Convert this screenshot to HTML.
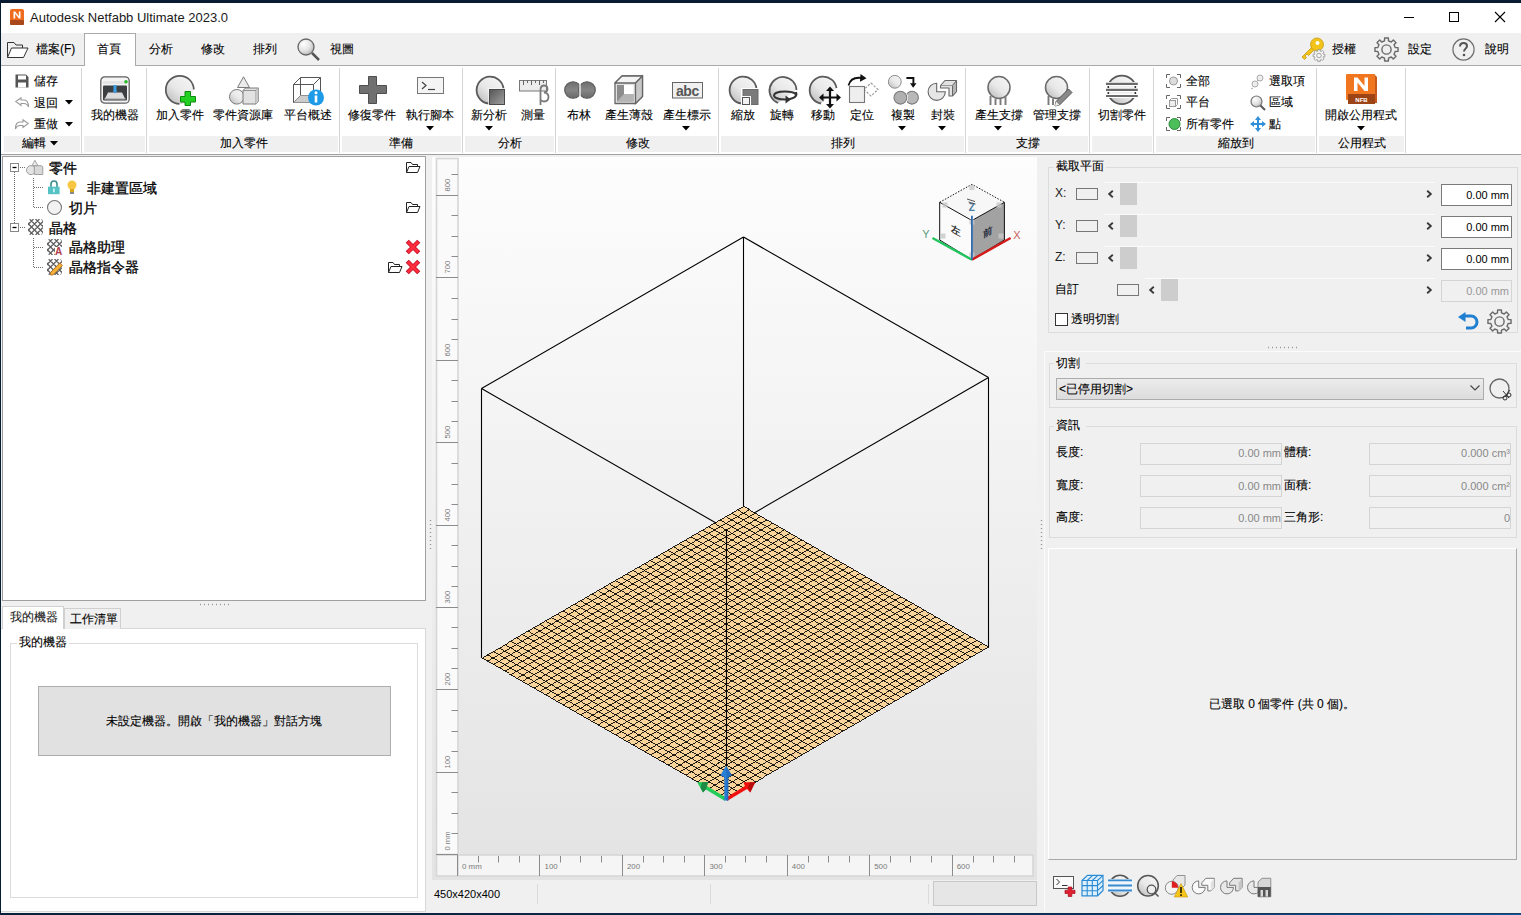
<!DOCTYPE html>
<html><head><meta charset="utf-8">
<style>
*{margin:0;padding:0;box-sizing:border-box}
html,body{width:1521px;height:915px;overflow:hidden;background:#f0f0f0;font-family:"Liberation Sans",sans-serif;font-size:12px;color:#000}
.a{position:absolute}
.t{position:absolute;white-space:nowrap;font-size:12px;line-height:14px;-webkit-text-stroke:0.1px currentColor}
svg{position:absolute;overflow:visible}
</style></head><body>
<svg width="0" height="0" style="left:0;top:0">
<defs>
<radialGradient id="sph" cx="0.35" cy="0.3" r="0.75"><stop offset="0" stop-color="#ffffff"/><stop offset="0.6" stop-color="#e2e2e2"/><stop offset="1" stop-color="#b4b4b4"/></radialGradient>
<linearGradient id="sph2" x1="0.85" y1="0.1" x2="0.15" y2="0.9"><stop offset="0" stop-color="#f4f4f4"/><stop offset="0.55" stop-color="#e8e8e8"/><stop offset="1" stop-color="#c2c2c2"/></linearGradient>
<linearGradient id="dsq" x1="0" y1="0" x2="1" y2="1"><stop offset="0" stop-color="#555"/><stop offset="1" stop-color="#a0a0a0"/></linearGradient>
<linearGradient id="bool" x1="0" y1="0" x2="0" y2="1"><stop offset="0" stop-color="#6e6e6e"/><stop offset="0.5" stop-color="#858585"/><stop offset="1" stop-color="#6a6a6a"/></linearGradient>
<linearGradient id="vpg" x1="0" y1="0" x2="0" y2="1"><stop offset="0" stop-color="#fdfdfd"/><stop offset="1" stop-color="#e2e2e2"/></linearGradient>
</defs></svg>

<div class="a" style="left:0px;top:0px;width:1521px;height:3px;background:#081b33"></div>
<div class="a" style="left:0px;top:0px;width:1px;height:915px;background:#081b33"></div>
<div class="a" style="left:0px;top:913px;width:1521px;height:1px;background:linear-gradient(to right,#0a1f3a,#102c4c 70%,#1a3d60)"></div>
<div class="a" style="left:0px;top:914px;width:1521px;height:1px;background:linear-gradient(to right,#0a1f3a,#0b2a50 60%,#0a5aa5)"></div>
<div class="a" style="left:1px;top:3px;width:1520px;height:30px;background:#fff"></div>
<svg style="left:10px;top:9px" width="14" height="16" viewBox="0 0 14 16"><rect x="0" y="0" width="14" height="16" rx="2" fill="#ef6c1f"/><rect x="0" y="11" width="14" height="5" rx="1" fill="#a9481a"/><path d="M3.5 9.5V2.5H5.2L8.8 7.2V2.5H10.5V9.5H8.8L5.2 4.8V9.5Z" fill="#fff"/></svg>
<div class="t" style="left:30px;top:10.0px;font-size:13px;line-height:15px;color:#1a1a1a;-webkit-text-stroke:0">Autodesk Netfabb Ultimate 2023.0</div>
<div class="a" style="left:1404px;top:17px;width:10px;height:1px;background:#000"></div>
<div class="a" style="left:1449px;top:12px;width:10px;height:10px;border:1px solid #000"></div>
<svg style="left:1495px;top:12px" width="10" height="10" viewBox="0 0 10 10"><path d="M0 0L10 10M10 0L0 10" stroke="#000" stroke-width="1.1"/></svg>
<div class="a" style="left:1px;top:33px;width:1520px;height:33px;background:#f0f0f0;border-bottom:1px solid #a9a9a9"></div>
<div class="a" style="left:84px;top:33px;width:52px;height:33px;background:#fff;border:1px solid #a9a9a9;border-bottom:none"></div>
<svg style="left:7px;top:41px" width="22" height="17" viewBox="0 0 22 17"><path d="M0.5 16.5V1.5H7L9 4H15.5V7" fill="none" stroke="#333" stroke-width="1"/><path d="M0.5 16.5L4.5 7H21L16.5 16.5Z" fill="#fff" stroke="#333" stroke-width="1"/></svg>
<div class="t" style="left:36px;top:42.0px;font-size:12px;line-height:14px;color:#000;">檔案(F)</div>
<div class="t" style="left:97px;top:42.0px;font-size:12px;line-height:14px;color:#000;">首頁</div>
<div class="t" style="left:149px;top:42.0px;font-size:12px;line-height:14px;color:#000;">分析</div>
<div class="t" style="left:201px;top:42.0px;font-size:12px;line-height:14px;color:#000;">修改</div>
<div class="t" style="left:253px;top:42.0px;font-size:12px;line-height:14px;color:#000;">排列</div>
<svg style="left:297px;top:38px" width="23" height="23" viewBox="0 0 23 23"><circle cx="9" cy="9" r="8" fill="url(#sph)" stroke="#666" stroke-width="1.3"/><path d="M15 15L22 22" stroke="#555" stroke-width="2.5"/></svg>
<div class="t" style="left:330px;top:42.0px;font-size:12px;line-height:14px;color:#000;">視圖</div>
<svg style="left:1300px;top:37px" width="25" height="24" viewBox="0 0 25 24"><path d="M12.5 9.5L2 20L4.5 22.5L6.5 20.5L5 19L7 17L8.5 18.5L15 12Z" fill="#f2c318" stroke="#c89a10" stroke-width="0.8"/><circle cx="17" cy="7.5" r="6.5" fill="#f2c318" stroke="#c89a10" stroke-width="0.8"/><circle cx="17.5" cy="6" r="2" fill="#fff"/><path d="M17.71 12.64L20.29 12.64L20.16 14.05L21.33 14.53L22.23 13.45L24.05 15.27L22.97 16.17L23.45 17.34L24.86 17.21L24.86 19.79L23.45 19.66L22.97 20.83L24.05 21.73L22.23 23.55L21.33 22.47L20.16 22.95L20.29 24.36L17.71 24.36L17.84 22.95L16.67 22.47L15.77 23.55L13.95 21.73L15.03 20.83L14.55 19.66L13.14 19.79L13.14 17.21L14.55 17.34L15.03 16.17L13.95 15.27L15.77 13.45L16.67 14.53L17.84 14.05Z" fill="#f4f4f4" stroke="#9a9a9a" stroke-width="0.9"/><circle cx="19" cy="18.5" r="2.3" fill="#f4f4f4" stroke="#9a9a9a" stroke-width="0.9"/></svg>
<div class="t" style="left:1332px;top:42.0px;font-size:12px;line-height:14px;color:#000;">授權</div>
<svg style="left:1374px;top:37px" width="25" height="25" viewBox="0 0 25 25"><path d="M10.58 0.96L14.42 0.96L14.46 3.82L17.25 4.98L19.30 2.98L22.02 5.70L20.02 7.75L21.18 10.54L24.04 10.58L24.04 14.42L21.18 14.46L20.02 17.25L22.02 19.30L19.30 22.02L17.25 20.02L14.46 21.18L14.42 24.04L10.58 24.04L10.54 21.18L7.75 20.02L5.70 22.02L2.98 19.30L4.98 17.25L3.82 14.46L0.96 14.42L0.96 10.58L3.82 10.54L4.98 7.75L2.98 5.70L5.70 2.98L7.75 4.98L10.54 3.82Z" fill="none" stroke="#6a6a6a" stroke-width="1.4" stroke-linejoin="round"/><circle cx="12.5" cy="12.5" r="4.6" fill="none" stroke="#6a6a6a" stroke-width="1.4"/></svg>
<div class="t" style="left:1408px;top:42.0px;font-size:12px;line-height:14px;color:#000;">設定</div>
<svg style="left:1452px;top:38px" width="23" height="23" viewBox="0 0 23 23"><circle cx="11.5" cy="11.5" r="10.6" fill="none" stroke="#707070" stroke-width="1.2"/><path d="M8 8.5C8 6 9.5 5 11.5 5C13.5 5 15 6.2 15 8C15 10.5 12 10.8 12 13.5" fill="none" stroke="#555" stroke-width="2"/><circle cx="12" cy="17" r="1.3" fill="#555"/></svg>
<div class="t" style="left:1485px;top:42.0px;font-size:12px;line-height:14px;color:#000;">說明</div>
<div class="a" style="left:1px;top:66px;width:1520px;height:88px;background:#fff"></div>
<div class="a" style="left:1px;top:154px;width:1520px;height:1px;background:#a0a0a0"></div>
<div class="a" style="left:1px;top:155px;width:1520px;height:2px;background:#f0f0f0"></div>
<div class="a" style="left:4px;top:136px;width:76px;height:16px;background:#f0f0f0"></div>
<div class="a" style="left:81px;top:68px;width:1px;height:85px;background:#d4d4d4"></div>
<div class="a" style="left:84px;top:136px;width:61px;height:16px;background:#f0f0f0"></div>
<div class="a" style="left:146px;top:68px;width:1px;height:85px;background:#d4d4d4"></div>
<div class="a" style="left:149px;top:136px;width:189px;height:16px;background:#f0f0f0"></div>
<div class="a" style="left:339px;top:68px;width:1px;height:85px;background:#d4d4d4"></div>
<div class="a" style="left:342px;top:136px;width:119px;height:16px;background:#f0f0f0"></div>
<div class="a" style="left:462px;top:68px;width:1px;height:85px;background:#d4d4d4"></div>
<div class="a" style="left:465px;top:136px;width:89px;height:16px;background:#f0f0f0"></div>
<div class="a" style="left:555px;top:68px;width:1px;height:85px;background:#d4d4d4"></div>
<div class="a" style="left:558px;top:136px;width:159px;height:16px;background:#f0f0f0"></div>
<div class="a" style="left:718px;top:68px;width:1px;height:85px;background:#d4d4d4"></div>
<div class="a" style="left:721px;top:136px;width:243px;height:16px;background:#f0f0f0"></div>
<div class="a" style="left:965px;top:68px;width:1px;height:85px;background:#d4d4d4"></div>
<div class="a" style="left:968px;top:136px;width:120px;height:16px;background:#f0f0f0"></div>
<div class="a" style="left:1089px;top:68px;width:1px;height:85px;background:#d4d4d4"></div>
<div class="a" style="left:1092px;top:136px;width:60px;height:16px;background:#f0f0f0"></div>
<div class="a" style="left:1153px;top:68px;width:1px;height:85px;background:#d4d4d4"></div>
<div class="a" style="left:1156px;top:136px;width:159px;height:16px;background:#f0f0f0"></div>
<div class="a" style="left:1316px;top:68px;width:1px;height:85px;background:#d4d4d4"></div>
<div class="a" style="left:1319px;top:136px;width:85px;height:16px;background:#f0f0f0"></div>
<div class="a" style="left:1405px;top:68px;width:1px;height:85px;background:#d4d4d4"></div>
<div class="t" style="left:22px;top:136.0px;font-size:12px;line-height:14px;color:#000;">編輯</div>
<svg style="left:50.0px;top:140.75px" width="8" height="4.5" viewBox="0 0 8 4.5"><path d="M0 0H8L4.0 4.5Z" fill="#000"/></svg>
<div class="t" style="left:183.5px;width:120px;text-align:center;top:136.0px;font-size:12px;line-height:14px;color:#000;">加入零件</div>
<div class="t" style="left:341.0px;width:120px;text-align:center;top:136.0px;font-size:12px;line-height:14px;color:#000;">準備</div>
<div class="t" style="left:449.5px;width:120px;text-align:center;top:136.0px;font-size:12px;line-height:14px;color:#000;">分析</div>
<div class="t" style="left:578.0px;width:120px;text-align:center;top:136.0px;font-size:12px;line-height:14px;color:#000;">修改</div>
<div class="t" style="left:782.7px;width:120px;text-align:center;top:136.0px;font-size:12px;line-height:14px;color:#000;">排列</div>
<div class="t" style="left:967.5px;width:120px;text-align:center;top:136.0px;font-size:12px;line-height:14px;color:#000;">支撐</div>
<div class="t" style="left:1175.6px;width:120px;text-align:center;top:136.0px;font-size:12px;line-height:14px;color:#000;">縮放到</div>
<div class="t" style="left:1301.7px;width:120px;text-align:center;top:136.0px;font-size:12px;line-height:14px;color:#000;">公用程式</div>
<svg style="left:15px;top:74px" width="14" height="14" viewBox="0 0 14 14"><path d="M0.5 0.5H11L13.5 3V13.5H0.5Z" fill="#555"/><rect x="3" y="1.5" width="8" height="4" fill="#fff"/><rect x="3" y="8.5" width="8" height="5" fill="#fff"/></svg>
<div class="t" style="left:34px;top:74.0px;font-size:12px;line-height:14px;color:#000;">儲存</div>
<svg style="left:15px;top:97px" width="14" height="11" viewBox="0 0 14 11"><path d="M0.8 4.5L6 0.8V3H9C12 3 13.5 5 13.5 10C12.5 7.5 11 6.5 9 6.5H6V8.5Z" fill="#fff" stroke="#999" stroke-width="1.1"/></svg>
<div class="t" style="left:34px;top:95.5px;font-size:12px;line-height:14px;color:#000;">退回</div>
<svg style="left:64.5px;top:100.25px" width="8" height="4.5" viewBox="0 0 8 4.5"><path d="M0 0H8L4.0 4.5Z" fill="#000"/></svg>
<svg style="left:15px;top:119px" width="14" height="11" viewBox="0 0 14 11"><path d="M13.2 4.5L8 0.8V3H5C2 3 0.5 5 0.5 10C1.5 7.5 3 6.5 5 6.5H8V8.5Z" fill="#fff" stroke="#999" stroke-width="1.1"/></svg>
<div class="t" style="left:34px;top:117.0px;font-size:12px;line-height:14px;color:#000;">重做</div>
<svg style="left:64.5px;top:121.75px" width="8" height="4.5" viewBox="0 0 8 4.5"><path d="M0 0H8L4.0 4.5Z" fill="#000"/></svg>
<svg style="left:100px;top:76px" width="30" height="28" viewBox="0 0 30 28"><rect x="0.8" y="0.8" width="28.4" height="26.4" rx="4" fill="#f4f4f4" stroke="#5e5e5e" stroke-width="1.3"/><rect x="3" y="5" width="24" height="3" fill="#e4e4e4"/><rect x="3" y="9.5" width="24" height="15" rx="1" fill="#3c3f42"/><path d="M5 22.5L8 16.5H22L25 22.5Z" fill="#dcdcdc"/><rect x="4.5" y="22" width="21" height="1.5" fill="#bbb"/><rect x="13.5" y="9" width="3" height="7" fill="#3a9be0"/><path d="M12.8 14.5H17.2L15 17.5Z" fill="#3a9be0"/><circle cx="26" cy="5.8" r="1.8" fill="#2cb82c"/></svg>
<div class="t" style="left:54.5px;width:120px;text-align:center;top:107.5px;font-size:12px;line-height:14px;color:#000;">我的機器</div>
<svg style="left:165px;top:75px" width="31" height="31" viewBox="0 0 31 31"><path d="M14.5 28.8A14 14 0 1 1 28.8 14.5" fill="url(#sph2)" stroke="#5a5a5a" stroke-width="1.7"/><path d="M28.8 14.5A14 14 0 0 1 14.5 28.8Z" fill="url(#sph2)"/><path d="M20 16.5H25.5V21.5H30.5V27H25.5V30.5H20V27H15.5V21.5H20Z" fill="#22d022" stroke="#0e8a0e" stroke-width="1"/></svg>
<div class="t" style="left:119.5px;width:120px;text-align:center;top:107.5px;font-size:12px;line-height:14px;color:#000;">加入零件</div>
<svg style="left:229px;top:76px" width="31" height="30" viewBox="0 0 31 30"><path d="M14.5 0.8L20.5 11.5H8.5Z" fill="#ebebeb" stroke="#7a7a7a" stroke-width="1"/><circle cx="7.8" cy="20.8" r="7.3" fill="url(#sph2)" stroke="#7a7a7a" stroke-width="1"/><path d="M14 14.5L16.5 12H29.5V25.5L27 28H14Z" fill="#e2e2e2" stroke="#7a7a7a" stroke-width="1"/><path d="M14 14.5H27V28M27 14.5L29.5 12" fill="none" stroke="#8a8a8a" stroke-width="0.9"/><path d="M27 14.5L29.5 12V25.5L27 28Z" fill="#c8c8c8"/></svg>
<div class="t" style="left:183.4px;width:120px;text-align:center;top:107.5px;font-size:12px;line-height:14px;color:#000;">零件資源庫</div>
<svg style="left:292px;top:76px" width="33" height="30" viewBox="0 0 33 30"><path d="M1.5 8.5H21.5V26.5H1.5Z M1.5 8.5L8.5 1.5H28.5L21.5 8.5 M28.5 1.5V19.5L21.5 26.5 M8.5 1.5V19.5H28.5 M8.5 19.5L1.5 26.5" fill="none" stroke="#555" stroke-width="1"/><path d="M1.5 26.5L8.5 19.5H28.5L21.5 26.5Z" fill="#ccc"/><circle cx="24" cy="21.5" r="8" fill="#1e9be8"/><rect x="22.7" y="19.5" width="2.6" height="7" fill="#fff"/><circle cx="24" cy="16.8" r="1.5" fill="#fff"/></svg>
<div class="t" style="left:247.7px;width:120px;text-align:center;top:107.5px;font-size:12px;line-height:14px;color:#000;">平台概述</div>
<svg style="left:359px;top:76px" width="28" height="28" viewBox="0 0 28 28"><path d="M9.5 0.5H17.5V9.5H27.5V17.5H17.5V27.5H9.5V17.5H0.5V9.5H9.5Z" fill="#707070" stroke="#4e4e4e"/></svg>
<div class="t" style="left:312.0px;width:120px;text-align:center;top:107.5px;font-size:12px;line-height:14px;color:#000;">修復零件</div>
<svg style="left:417px;top:77px" width="27" height="17" viewBox="0 0 27 17"><rect x="0.5" y="0.5" width="26" height="16" fill="#f4f4f4" stroke="#777"/><path d="M5 5L9 8.5L5 12" fill="none" stroke="#444" stroke-width="1.2"/><path d="M11 12.5H18" stroke="#444" stroke-width="1.2"/></svg>
<div class="t" style="left:370.0px;width:120px;text-align:center;top:107.5px;font-size:12px;line-height:14px;color:#000;">執行腳本</div>
<svg style="left:426.0px;top:125.75px" width="8" height="4.5" viewBox="0 0 8 4.5"><path d="M0 0H8L4.0 4.5Z" fill="#000"/></svg>
<svg style="left:475px;top:75px" width="31" height="30" viewBox="0 0 31 30"><path d="M13.5 28.5A13.5 13.5 0 1 1 28.5 13.5" fill="url(#sph2)" stroke="#5a5a5a" stroke-width="1.8"/><rect x="13.5" y="13.5" width="17" height="17" fill="#fff"/><rect x="14.5" y="14.5" width="15" height="15" fill="url(#dsq)" stroke="#4a4a4a"/></svg>
<div class="t" style="left:429.0px;width:120px;text-align:center;top:107.5px;font-size:12px;line-height:14px;color:#000;">新分析</div>
<svg style="left:484.75px;top:125.75px" width="8" height="4.5" viewBox="0 0 8 4.5"><path d="M0 0H8L4.0 4.5Z" fill="#000"/></svg>
<svg style="left:519px;top:79px" width="31" height="27" viewBox="0 0 31 27"><rect x="0.5" y="1.5" width="27" height="10.5" fill="#ececec" stroke="#777"/><path d="M4.5 1.5V6M8.5 1.5V4M12.5 1.5V6M16.5 1.5V4M20.5 1.5V6M24.5 1.5V4" stroke="#666"/><path d="M21.5 26V11C21.5 7.5 23 6.5 25 6.5C27 6.5 28.5 7.8 28.5 10C28.5 12 27 13.2 25 13.5C27.8 13.8 29.5 15.5 29.5 18C29.5 20.8 27.5 22.5 25 22.5C23.5 22.5 22.3 21.8 21.5 20.8" fill="none" stroke="#7a7a7a" stroke-width="1.8"/></svg>
<div class="t" style="left:472.5px;width:120px;text-align:center;top:107.5px;font-size:12px;line-height:14px;color:#000;">測量</div>
<svg style="left:564px;top:80px" width="32" height="20" viewBox="0 0 32 20"><circle cx="9" cy="10" r="8.3" fill="url(#bool)" stroke="#555" stroke-width="1.1"/><circle cx="23" cy="10" r="8.3" fill="url(#bool)" stroke="#555" stroke-width="1.1"/><path d="M16 2V18" stroke="#fff" stroke-width="1.3"/></svg>
<div class="t" style="left:519.4px;width:120px;text-align:center;top:107.5px;font-size:12px;line-height:14px;color:#000;">布林</div>
<svg style="left:614px;top:75px" width="30" height="30" viewBox="0 0 30 30"><path d="M1 8L8 1H28.5V21.5L21.5 28.5H1Z" fill="#e0e0e0" stroke="#666" stroke-width="1.3"/><path d="M1 8L8 1H28.5L21.5 8Z" fill="#f4f4f4" stroke="#666" stroke-width="1.3" stroke-linejoin="round"/><path d="M21.5 8L28.5 1V21.5L21.5 28.5Z" fill="#c8c8c8" stroke="#666" stroke-width="1.3"/><rect x="3" y="10" width="16.5" height="16.5" fill="#fff"/><path d="M3 10H10V19H19.5V26.5H3Z" fill="#8c8c8c"/><path d="M3 26.5L10 19H19.5V26.5Z" fill="#b4b4b4"/></svg>
<div class="t" style="left:568.5px;width:120px;text-align:center;top:107.5px;font-size:12px;line-height:14px;color:#000;">產生薄殼</div>
<svg style="left:672px;top:82px" width="31" height="17" viewBox="0 0 31 17"><rect x="0.5" y="0.5" width="30" height="15.5" fill="#f0f0f0" stroke="#666"/><text x="15.5" y="13.5" text-anchor="middle" font-size="14" font-weight="bold" font-family="Liberation Sans" fill="#555" letter-spacing="-0.3">abc</text></svg>
<div class="t" style="left:626.5px;width:120px;text-align:center;top:107.5px;font-size:12px;line-height:14px;color:#000;">產生標示</div>
<svg style="left:682.0px;top:125.75px" width="8" height="4.5" viewBox="0 0 8 4.5"><path d="M0 0H8L4.0 4.5Z" fill="#000"/></svg>
<svg style="left:728px;top:75px" width="32" height="31" viewBox="0 0 32 31"><path d="M13.5 28.5A13.5 13.5 0 1 1 28.5 13.5" fill="url(#sph2)" stroke="#5a5a5a" stroke-width="1.8"/><rect x="13" y="13" width="18" height="18" fill="#fff"/><rect x="15" y="14.5" width="15" height="15" fill="#7a7a7a" stroke="#6a6a6a"/><rect x="13" y="21" width="10" height="10" fill="#fff"/><rect x="14.5" y="22.5" width="7" height="7" fill="#f2f2f2" stroke="#555"/></svg>
<div class="t" style="left:682.7px;width:120px;text-align:center;top:107.5px;font-size:12px;line-height:14px;color:#000;">縮放</div>
<svg style="left:768px;top:75px" width="32" height="31" viewBox="0 0 32 31"><path d="M10 28A13.5 13.5 0 1 1 28.5 15" fill="url(#sph2)" stroke="#5a5a5a" stroke-width="1.8"/><path d="M28 17C30 22 24 24.5 17 24.5C10 24.5 6 22.5 6 20.5C6 18 11 16.5 17 16.5C22 16.5 26 17.5 27.5 19" fill="none" stroke="#333" stroke-width="2"/><path d="M17.5 20.5L23 24.5L17.5 28.5Z" fill="#333"/></svg>
<div class="t" style="left:722.3px;width:120px;text-align:center;top:107.5px;font-size:12px;line-height:14px;color:#000;">旋轉</div>
<svg style="left:808px;top:75px" width="32" height="32" viewBox="0 0 32 32"><path d="M13 28.5A13.5 13.5 0 1 1 28.5 13" fill="url(#sph2)" stroke="#5a5a5a" stroke-width="1.8"/><path d="M22 15V30M14.5 22.5H29.5" stroke="#111" stroke-width="2.2"/><path d="M22 11.5L26 16H18Z M22 33.5L26 29H18Z M11 22.5L15.5 18.5V26.5Z M33 22.5L28.5 18.5V26.5Z" fill="#111"/></svg>
<div class="t" style="left:762.5px;width:120px;text-align:center;top:107.5px;font-size:12px;line-height:14px;color:#000;">移動</div>
<svg style="left:847px;top:74px" width="32" height="31" viewBox="0 0 32 31"><path d="M24 9L31 15.5L24 22L17 15.5Z" fill="none" stroke="#9a9a9a" stroke-width="1.2" stroke-dasharray="2.2 1.6"/><rect x="2.5" y="12.5" width="15" height="16" fill="#eee" stroke="#777" stroke-width="1.1"/><path d="M1.5 11.5C3 5.5 8 3 15 4" fill="none" stroke="#111" stroke-width="1.8"/><path d="M13.5 0L19.5 4.3L13 7.8Z" fill="#111"/></svg>
<div class="t" style="left:802.2px;width:120px;text-align:center;top:107.5px;font-size:12px;line-height:14px;color:#000;">定位</div>
<svg style="left:880px;top:70px" width="40" height="40" viewBox="0 0 40 40"><circle cx="14.8" cy="11.8" r="6.4" fill="url(#sph2)" stroke="#8a8a8a" stroke-width="1"/><path d="M26.4 8H33.4V14" fill="none" stroke="#111" stroke-width="1.9"/><path d="M30 13.3H36.5L33.2 17.8Z" fill="#111"/><circle cx="32" cy="27.7" r="6.4" fill="#b8b8b8" stroke="#7a7a7a" stroke-width="1.1"/><circle cx="20.4" cy="27.7" r="7.6" fill="#fff"/><circle cx="20.4" cy="27.7" r="6.4" fill="#b0b0b0" stroke="#7a7a7a" stroke-width="1.1"/></svg>
<div class="t" style="left:843.0px;width:120px;text-align:center;top:107.5px;font-size:12px;line-height:14px;color:#000;">複製</div>
<svg style="left:897.8px;top:125.75px" width="8" height="4.5" viewBox="0 0 8 4.5"><path d="M0 0H8L4.0 4.5Z" fill="#000"/></svg>
<svg style="left:920px;top:70px" width="40" height="40" viewBox="0 0 40 40"><path d="M16.7 21.75V13.2A8.6 8.6 0 1 0 25.3 21.75Z" fill="#e6e6e6" stroke="#666" stroke-width="1.1"/><path d="M20.5 15.5L25 10.5H36.5V21.5L32.5 26H29V18H20.5Z" fill="#e2e2e2" stroke="#666" stroke-width="1.1" stroke-linejoin="round"/><path d="M32.5 15.5V26L36.5 21.5V10.5Z" fill="#b5b5b5" stroke="#666" stroke-width="1"/><path d="M20.5 15.5H32.5L36.5 10.5" fill="none" stroke="#888" stroke-width="0.8"/></svg>
<div class="t" style="left:882.7px;width:120px;text-align:center;top:107.5px;font-size:12px;line-height:14px;color:#000;">封裝</div>
<svg style="left:938.0px;top:125.75px" width="8" height="4.5" viewBox="0 0 8 4.5"><path d="M0 0H8L4.0 4.5Z" fill="#000"/></svg>
<svg style="left:986px;top:76px" width="26" height="30" viewBox="0 0 26 30"><circle cx="13" cy="11.5" r="11" fill="url(#sph2)" stroke="#6a6a6a" stroke-width="1.5"/><path d="M4.5 20V29M9.5 22.5V29M14.5 22.5V29M19.5 20V29" stroke="#7a7a7a" stroke-width="1.9"/></svg>
<div class="t" style="left:938.7px;width:120px;text-align:center;top:107.5px;font-size:12px;line-height:14px;color:#000;">產生支撐</div>
<svg style="left:993.7px;top:125.75px" width="8" height="4.5" viewBox="0 0 8 4.5"><path d="M0 0H8L4.0 4.5Z" fill="#000"/></svg>
<svg style="left:1045px;top:76px" width="28" height="30" viewBox="0 0 28 30"><circle cx="11.5" cy="11.5" r="11" fill="url(#sph2)" stroke="#6a6a6a" stroke-width="1.5"/><path d="M3.5 20V29M8 22.5V29" stroke="#7a7a7a" stroke-width="1.9"/><path d="M23.5 13L27 16.5L14.5 29L10 30L11 25.5Z" fill="#8a8a8a" stroke="#555" stroke-width="1"/><path d="M10 30L11 25.5L14.5 29Z" fill="#eee"/></svg>
<div class="t" style="left:996.5px;width:120px;text-align:center;top:107.5px;font-size:12px;line-height:14px;color:#000;">管理支撐</div>
<svg style="left:1052.0px;top:125.75px" width="8" height="4.5" viewBox="0 0 8 4.5"><path d="M0 0H8L4.0 4.5Z" fill="#000"/></svg>
<svg style="left:1100px;top:70px" width="44" height="40" viewBox="0 0 44 40"><circle cx="21.8" cy="19.85" r="14.3" fill="url(#sph2)" stroke="#585858" stroke-width="1.8"/><rect x="5" y="12" width="34" height="16" fill="#fff"/><path d="M6 13.9H37.8M6 19.9H37.8M6 26H37.8" stroke="#6a6a6a" stroke-width="2.2"/><path d="M10 16.9H33.6M10 22.9H33.6" stroke="#e6e6e6" stroke-width="1.2"/><circle cx="8.3" cy="16.9" r="1" fill="#222"/><circle cx="35.3" cy="16.9" r="1" fill="#222"/><circle cx="8.3" cy="22.9" r="1" fill="#222"/><circle cx="35.3" cy="22.9" r="1" fill="#222"/></svg>
<div class="t" style="left:1061.6px;width:120px;text-align:center;top:107.5px;font-size:12px;line-height:14px;color:#000;">切割零件</div>
<svg style="left:1166px;top:74px" width="15" height="14" viewBox="0 0 15 14"><path d="M0.5 4V0.5H4M11 0.5H14.5V4M14.5 10V13.5H11M4 13.5H0.5V10" fill="none" stroke="#666"/></svg>
<svg style="left:1168px;top:76px" width="11" height="10" viewBox="0 0 11 10"><circle cx="5.5" cy="5" r="4" fill="#ddd" stroke="#999"/></svg>
<div class="t" style="left:1186px;top:74.0px;font-size:12px;line-height:14px;color:#000;">全部</div>
<svg style="left:1166px;top:95px" width="15" height="14" viewBox="0 0 15 14"><path d="M0.5 4V0.5H4M11 0.5H14.5V4M14.5 10V13.5H11M4 13.5H0.5V10" fill="none" stroke="#666"/></svg>
<svg style="left:1169px;top:98px" width="9" height="9" viewBox="0 0 9 9"><rect x="0.5" y="2.5" width="6" height="6" fill="#eee" stroke="#999"/><path d="M0.5 2.5L2.5 0.5H8.5V6.5L6.5 8.5" fill="none" stroke="#999"/></svg>
<div class="t" style="left:1186px;top:95.3px;font-size:12px;line-height:14px;color:#000;">平台</div>
<svg style="left:1166px;top:117px" width="15" height="14" viewBox="0 0 15 14"><path d="M0.5 4V0.5H4M11 0.5H14.5V4M14.5 10V13.5H11M4 13.5H0.5V10" fill="none" stroke="#666"/></svg>
<svg style="left:1168px;top:118px" width="12" height="12" viewBox="0 0 12 12"><circle cx="6.5" cy="6" r="5.5" fill="#4cbf5a" stroke="#2a8a3a"/></svg>
<div class="t" style="left:1186px;top:117.4px;font-size:12px;line-height:14px;color:#000;">所有零件</div>
<svg style="left:1251px;top:74px" width="14" height="15" viewBox="0 0 14 15"><circle cx="9" cy="4" r="3" fill="#eee" stroke="#aaa"/><circle cx="4" cy="10" r="3" fill="#eee" stroke="#aaa"/><path d="M7 6L5 8M2 14L0 15" stroke="#aaa"/></svg>
<div class="t" style="left:1269px;top:74.0px;font-size:12px;line-height:14px;color:#000;">選取項</div>
<svg style="left:1250px;top:95px" width="16" height="16" viewBox="0 0 16 16"><circle cx="6.5" cy="6.5" r="5.5" fill="url(#sph)" stroke="#777" stroke-width="1.2"/><path d="M10.5 10.5L15 15" stroke="#555" stroke-width="2"/></svg>
<div class="t" style="left:1269px;top:95.3px;font-size:12px;line-height:14px;color:#000;">區域</div>
<svg style="left:1250px;top:116px" width="16" height="16" viewBox="0 0 16 16"><path d="M8 0L11 4H9V7H12V5L16 8L12 11V9H9V12H11L8 16L5 12H7V9H4V11L0 8L4 5V7H7V4H5Z" fill="#2f8fd8"/></svg>
<div class="t" style="left:1269px;top:117.4px;font-size:12px;line-height:14px;color:#000;">點</div>
<svg style="left:1346px;top:74px" width="32" height="32" viewBox="0 0 32 32"><path d="M2 0H28L31 3V29H2Z" fill="#c65a1c"/><rect x="0" y="0" width="29" height="26" rx="1" fill="#f0761f"/><rect x="2" y="20" width="27" height="10" fill="#9c4416"/><path d="M8 17V3.5H11.5L18.5 12V3.5H22V17H18.5L11.5 8.5V17Z" fill="#fff"/><text x="15.5" y="28" text-anchor="middle" font-size="6" font-weight="bold" font-family="Liberation Sans" fill="#fff">NFB</text></svg>
<div class="t" style="left:1301.3px;width:120px;text-align:center;top:107.5px;font-size:12px;line-height:14px;color:#000;">開啟公用程式</div>
<svg style="left:1357.2px;top:125.75px" width="8" height="4.5" viewBox="0 0 8 4.5"><path d="M0 0H8L4.0 4.5Z" fill="#000"/></svg>
<div class="a" style="left:2px;top:156px;width:424px;height:445px;background:#fff;border:1px solid #a0a0a0"></div>
<svg style="left:0px;top:0px" width="1" height="1" viewBox="0 0 1 1"></svg>
<svg style="left:0;top:0" width="100" height="300"><path d="M14.5 172V223M20 167.5H26M20 227.5H26M33.5 178V207.5M34 187.5H43M34 207.5H43M33.5 238V267.5M34 247.5H43M34 267.5H43" fill="none" stroke="#6a6a6a" stroke-width="1" stroke-dasharray="1 1"/><rect x="10.5" y="163.5" width="8" height="8" fill="#fff" stroke="#888"/><path d="M12.5 167.5H16.5" stroke="#000" stroke-width="1.3"/><rect x="10.5" y="223.5" width="8" height="8" fill="#fff" stroke="#888"/><path d="M12.5 227.5H16.5" stroke="#000" stroke-width="1.3"/></svg>
<svg style="left:24px;top:157px" width="20" height="20" viewBox="0 0 20 20"><path d="M10.9 3.3L14 8.7H8Z" fill="#eee" stroke="#999" stroke-width="0.9"/><circle cx="7" cy="13.1" r="4.5" fill="#e4e4e4" stroke="#999" stroke-width="0.9"/><path d="M10.3 8.7H17.6L18.8 10V17.5H10.3Z" fill="#d8d8d8" stroke="#999" stroke-width="0.9"/></svg>
<div class="t" style="left:49px;top:159.5px;font-size:14px;line-height:16px;color:#000;-webkit-text-stroke:0.3px currentColor">零件</div>
<svg style="left:48px;top:179px" width="12" height="16" viewBox="0 0 12 16"><path d="M3 8V5A3 3 0 0 1 9 5V8" fill="none" stroke="#3a8f8f" stroke-width="1.6"/><rect x="0" y="7.7" width="11.6" height="7.5" fill="#55c2c6"/><rect x="5.2" y="9.5" width="1.4" height="3.8" fill="#e8ffff"/></svg>
<svg style="left:67px;top:180px" width="10" height="15" viewBox="0 0 10 15"><circle cx="5" cy="5" r="4.5" fill="#f7c642"/><path d="M3 9H7V12H3Z" fill="#d9a520"/><rect x="3" y="12" width="4" height="2" fill="#888"/></svg>
<div class="t" style="left:86.5px;top:179.5px;font-size:14px;line-height:16px;color:#000;-webkit-text-stroke:0.3px currentColor">非建置區域</div>
<svg style="left:47px;top:200px" width="15" height="15" viewBox="0 0 15 15"><circle cx="7.5" cy="7.5" r="7" fill="#f2f2f2" stroke="#777" stroke-width="1.1"/></svg>
<div class="t" style="left:69px;top:199.5px;font-size:14px;line-height:16px;color:#000;-webkit-text-stroke:0.3px currentColor">切片</div>
<svg style="left:28px;top:219px" width="15" height="16" viewBox="0 0 15 16"><clipPath id="cl1"><rect x="0" y="0" width="15" height="16" rx="3"/></clipPath><path d="M-16.5 0L-0.5 16M-0.5 0L-16.5 16M-10.5 0L5.5 16M5.5 0L-10.5 16M-4.5 0L11.5 16M11.5 0L-4.5 16M1.5 0L17.5 16M17.5 0L1.5 16M7.5 0L23.5 16M23.5 0L7.5 16M13.5 0L29.5 16M29.5 0L13.5 16M19.5 0L35.5 16M35.5 0L19.5 16" clip-path="url(#cl1)" stroke="#5e5e5e" stroke-width="1.25" fill="none"/></svg>
<div class="t" style="left:49px;top:219.5px;font-size:14px;line-height:16px;color:#000;-webkit-text-stroke:0.3px currentColor">晶格</div>
<svg style="left:47px;top:239px" width="15" height="16" viewBox="0 0 15 16"><clipPath id="cl2"><rect x="0" y="0" width="15" height="16" rx="3"/></clipPath><path d="M-16.5 0L-0.5 16M-0.5 0L-16.5 16M-10.5 0L5.5 16M5.5 0L-10.5 16M-4.5 0L11.5 16M11.5 0L-4.5 16M1.5 0L17.5 16M17.5 0L1.5 16M7.5 0L23.5 16M23.5 0L7.5 16M13.5 0L29.5 16M29.5 0L13.5 16M19.5 0L35.5 16M35.5 0L19.5 16" clip-path="url(#cl2)" stroke="#5e5e5e" stroke-width="1.25" fill="none"/><rect x="8" y="8" width="7" height="8" fill="#fff"/><text x="11.5" y="16" text-anchor="middle" font-size="10" font-weight="bold" font-family="Liberation Sans" fill="#b03a4a">A</text></svg>
<div class="t" style="left:69px;top:239.0px;font-size:14px;line-height:16px;color:#000;-webkit-text-stroke:0.3px currentColor">晶格助理</div>
<svg style="left:47px;top:259px" width="15" height="16" viewBox="0 0 15 16"><clipPath id="cl3"><rect x="0" y="0" width="15" height="16" rx="3"/></clipPath><path d="M-16.5 0L-0.5 16M-0.5 0L-16.5 16M-10.5 0L5.5 16M5.5 0L-10.5 16M-4.5 0L11.5 16M11.5 0L-4.5 16M1.5 0L17.5 16M17.5 0L1.5 16M7.5 0L23.5 16M23.5 0L7.5 16M13.5 0L29.5 16M29.5 0L13.5 16M19.5 0L35.5 16M35.5 0L19.5 16" clip-path="url(#cl3)" stroke="#5e5e5e" stroke-width="1.25" fill="none"/><path d="M13 4L15.5 6.5L6 16H3.5V13.5Z" fill="#f3b13a" stroke="#b06a1a" stroke-width="0.8"/></svg>
<div class="t" style="left:69px;top:259.0px;font-size:14px;line-height:16px;color:#000;-webkit-text-stroke:0.3px currentColor">晶格指令器</div>
<svg style="left:406px;top:162px" width="15" height="11" viewBox="0 0 15 11"><path d="M0.5 10.5V0.5H5L6.5 2.5H11.5V4.5" fill="none" stroke="#222"/><path d="M0.5 10.5L3 4.5H14L11.5 10.5Z" fill="#fff" stroke="#222"/></svg>
<svg style="left:406px;top:202px" width="15" height="11" viewBox="0 0 15 11"><path d="M0.5 10.5V0.5H5L6.5 2.5H11.5V4.5" fill="none" stroke="#222"/><path d="M0.5 10.5L3 4.5H14L11.5 10.5Z" fill="#fff" stroke="#222"/></svg>
<svg style="left:388px;top:262px" width="15" height="11" viewBox="0 0 15 11"><path d="M0.5 10.5V0.5H5L6.5 2.5H11.5V4.5" fill="none" stroke="#222"/><path d="M0.5 10.5L3 4.5H14L11.5 10.5Z" fill="#fff" stroke="#222"/></svg>
<svg style="left:406px;top:240px" width="14" height="14" viewBox="0 0 14 14"><path d="M2.8 2.8L11.2 11.2M11.2 2.8L2.8 11.2" stroke="#c0102c" stroke-width="4.4" stroke-linecap="square"/><path d="M2.8 2.8L11.2 11.2M11.2 2.8L2.8 11.2" stroke="#ff2c3c" stroke-width="2.8" stroke-linecap="square"/></svg>
<svg style="left:406px;top:260px" width="14" height="14" viewBox="0 0 14 14"><path d="M2.8 2.8L11.2 11.2M11.2 2.8L2.8 11.2" stroke="#c0102c" stroke-width="4.4" stroke-linecap="square"/><path d="M2.8 2.8L11.2 11.2M11.2 2.8L2.8 11.2" stroke="#ff2c3c" stroke-width="2.8" stroke-linecap="square"/></svg>
<svg style="left:200px;top:603px" width="30" height="3"><path d="M0 1.5H30" stroke="#999" stroke-dasharray="1 3" stroke-width="1.5"/></svg>
<div class="a" style="left:1px;top:628px;width:425px;height:284px;background:#fff;border:1px solid #d8d8d8;border-left:none"></div>
<div class="a" style="left:64px;top:608px;width:57px;height:21px;background:#f0f0f0;border:1px solid #d0d0d0;border-bottom:none"></div>
<div class="a" style="left:2px;top:606px;width:62px;height:23px;background:#fff;border:1px solid #d0d0d0;border-bottom:none"></div>
<div class="t" style="left:10px;top:609.5px;font-size:12px;line-height:14px;color:#222;">我的機器</div>
<div class="t" style="left:70px;top:611.5px;font-size:12px;line-height:14px;color:#000;">工作清單</div>
<div class="a" style="left:10px;top:643px;width:408px;height:255px;border:1px solid #dcdcdc"></div>
<div class="a" style="left:17px;top:635px;width:52px;height:14px;background:#fff"></div>
<div class="t" style="left:19px;top:635.0px;font-size:12px;line-height:14px;color:#000;">我的機器</div>
<div class="a" style="left:38px;top:686px;width:353px;height:70px;background:#e1e1e1;border:1px solid #adadad"></div>
<div class="t" style="left:63.5px;width:300px;text-align:center;top:713.5px;font-size:12px;line-height:14px;color:#000;">未設定機器。開啟「我的機器」對話方塊</div>
<svg style="left:429px;top:520px" width="3" height="30"><path d="M1.5 0V30" stroke="#999" stroke-dasharray="1 3" stroke-width="1.5"/></svg>
<svg style="left:1040px;top:520px" width="3" height="30"><path d="M1.5 0V30" stroke="#999" stroke-dasharray="1 3" stroke-width="1.5"/></svg>
<div class="t" style="left:434px;top:886.5px;font-size:11px;line-height:14px;color:#000;;-webkit-text-stroke:0">450x420x400</div>
<div class="a" style="left:537px;top:884px;width:1px;height:20px;background:#dadada"></div>
<div class="a" style="left:710px;top:884px;width:1px;height:20px;background:#dadada"></div>
<div class="a" style="left:928px;top:884px;width:1px;height:20px;background:#dadada"></div>
<div class="a" style="left:933px;top:881px;width:104px;height:25px;background:#e6e6e6;border:1px solid #c8c8c8"></div>
<div class="a" style="left:1048px;top:167px;width:470px;height:166px;border:1px solid #dcdcdc"></div>
<div class="a" style="left:1054px;top:159px;width:52px;height:14px;background:#f0f0f0"></div>
<div class="t" style="left:1056px;top:159.0px;font-size:12px;line-height:14px;color:#000;">截取平面</div>
<div class="t" style="left:1055px;top:185.8px;font-size:12px;line-height:14px;color:#222;;-webkit-text-stroke:0">X:</div>
<div class="a" style="left:1076px;top:188px;width:22px;height:12px;background:#f0f0f0;border:1px solid #777"></div>
<div class="a" style="left:1104px;top:182px;width:331px;height:1px;background:#fbfbfb"></div>
<svg style="left:1108px;top:190px" width="6" height="8" viewBox="0 0 6 8"><path d="M4.8 0.8L1.2 4L4.8 7.2" fill="none" stroke="#3a3a3a" stroke-width="1.9"/></svg>
<div class="a" style="left:1120px;top:183px;width:17px;height:22px;background:#cdcdcd"></div>
<svg style="left:1426px;top:190px" width="6" height="8" viewBox="0 0 6 8"><path d="M1.2 0.8L4.8 4L1.2 7.2" fill="none" stroke="#3a3a3a" stroke-width="1.9"/></svg>
<div class="a" style="left:1441px;top:184px;width:71px;height:22px;background:#fff;border:1px solid #7a7a7a"></div>
<div class="t" style="left:1309.0px;width:200px;text-align:right;top:187.7px;font-size:11px;line-height:14px;color:#000;;-webkit-text-stroke:0">0.00 mm</div>
<div class="t" style="left:1055px;top:217.9px;font-size:12px;line-height:14px;color:#222;;-webkit-text-stroke:0">Y:</div>
<div class="a" style="left:1076px;top:220px;width:22px;height:12px;background:#f0f0f0;border:1px solid #777"></div>
<div class="a" style="left:1104px;top:214px;width:331px;height:1px;background:#fbfbfb"></div>
<svg style="left:1108px;top:222px" width="6" height="8" viewBox="0 0 6 8"><path d="M4.8 0.8L1.2 4L4.8 7.2" fill="none" stroke="#3a3a3a" stroke-width="1.9"/></svg>
<div class="a" style="left:1120px;top:215px;width:17px;height:22px;background:#cdcdcd"></div>
<svg style="left:1426px;top:222px" width="6" height="8" viewBox="0 0 6 8"><path d="M1.2 0.8L4.8 4L1.2 7.2" fill="none" stroke="#3a3a3a" stroke-width="1.9"/></svg>
<div class="a" style="left:1441px;top:216px;width:71px;height:22px;background:#fff;border:1px solid #7a7a7a"></div>
<div class="t" style="left:1309.0px;width:200px;text-align:right;top:219.8px;font-size:11px;line-height:14px;color:#000;;-webkit-text-stroke:0">0.00 mm</div>
<div class="t" style="left:1055px;top:249.8px;font-size:12px;line-height:14px;color:#222;;-webkit-text-stroke:0">Z:</div>
<div class="a" style="left:1076px;top:252px;width:22px;height:12px;background:#f0f0f0;border:1px solid #777"></div>
<div class="a" style="left:1104px;top:246px;width:331px;height:1px;background:#fbfbfb"></div>
<svg style="left:1108px;top:254px" width="6" height="8" viewBox="0 0 6 8"><path d="M4.8 0.8L1.2 4L4.8 7.2" fill="none" stroke="#3a3a3a" stroke-width="1.9"/></svg>
<div class="a" style="left:1120px;top:247px;width:17px;height:22px;background:#cdcdcd"></div>
<svg style="left:1426px;top:254px" width="6" height="8" viewBox="0 0 6 8"><path d="M1.2 0.8L4.8 4L1.2 7.2" fill="none" stroke="#3a3a3a" stroke-width="1.9"/></svg>
<div class="a" style="left:1441px;top:248px;width:71px;height:22px;background:#fff;border:1px solid #7a7a7a"></div>
<div class="t" style="left:1309.0px;width:200px;text-align:right;top:251.7px;font-size:11px;line-height:14px;color:#000;;-webkit-text-stroke:0">0.00 mm</div>
<div class="t" style="left:1055px;top:281.8px;font-size:12px;line-height:14px;color:#000;">自訂</div>
<div class="a" style="left:1117px;top:284px;width:22px;height:12px;background:#f0f0f0;border:1px solid #777"></div>
<div class="a" style="left:1145px;top:278px;width:290px;height:1px;background:#fbfbfb"></div>
<svg style="left:1149px;top:286px" width="6" height="8" viewBox="0 0 6 8"><path d="M4.8 0.8L1.2 4L4.8 7.2" fill="none" stroke="#3a3a3a" stroke-width="1.9"/></svg>
<div class="a" style="left:1161px;top:279px;width:17px;height:22px;background:#cdcdcd"></div>
<svg style="left:1426px;top:286px" width="6" height="8" viewBox="0 0 6 8"><path d="M1.2 0.8L4.8 4L1.2 7.2" fill="none" stroke="#3a3a3a" stroke-width="1.9"/></svg>
<div class="a" style="left:1441px;top:280px;width:71px;height:22px;background:#f0f0f0;border:1px solid #d4d4d4"></div>
<div class="t" style="left:1309.0px;width:200px;text-align:right;top:283.7px;font-size:11px;line-height:14px;color:#999;;-webkit-text-stroke:0">0.00 mm</div>
<div class="a" style="left:1055px;top:313px;width:13px;height:13px;background:#fff;border:1px solid #333"></div>
<div class="t" style="left:1071px;top:311.5px;font-size:12px;line-height:14px;color:#000;">透明切割</div>
<svg style="left:1458px;top:312px" width="22" height="19" viewBox="0 0 22 19"><path d="M7 4H13A6 6 0 0 1 13 16H8" fill="none" stroke="#1f7fd0" stroke-width="3"/><path d="M0 5L7.5 0V10Z" fill="#1f7fd0"/></svg>
<svg style="left:1487px;top:309px" width="25" height="25" viewBox="0 0 25 25"><path d="M10.58 0.96L14.42 0.96L14.46 3.82L17.25 4.98L19.30 2.98L22.02 5.70L20.02 7.75L21.18 10.54L24.04 10.58L24.04 14.42L21.18 14.46L20.02 17.25L22.02 19.30L19.30 22.02L17.25 20.02L14.46 21.18L14.42 24.04L10.58 24.04L10.54 21.18L7.75 20.02L5.70 22.02L2.98 19.30L4.98 17.25L3.82 14.46L0.96 14.42L0.96 10.58L3.82 10.54L4.98 7.75L2.98 5.70L5.70 2.98L7.75 4.98L10.54 3.82Z" fill="none" stroke="#6a6a6a" stroke-width="1.4" stroke-linejoin="round"/><circle cx="12.5" cy="12.5" r="4.6" fill="none" stroke="#6a6a6a" stroke-width="1.4"/></svg>
<svg style="left:1268px;top:346px" width="30" height="3"><path d="M0 1.5H30" stroke="#999" stroke-dasharray="1 3" stroke-width="1.5"/></svg>
<div class="a" style="left:1044px;top:351px;width:477px;height:1px;background:#fbfbfb"></div>
<div class="a" style="left:1044px;top:351px;width:1px;height:560px;background:#fbfbfb"></div>
<div class="a" style="left:1049px;top:363px;width:468px;height:45px;border:1px solid #dcdcdc"></div>
<div class="a" style="left:1054px;top:356px;width:32px;height:14px;background:#f0f0f0"></div>
<div class="t" style="left:1056px;top:355.8px;font-size:12px;line-height:14px;color:#000;">切割</div>
<div class="a" style="left:1056px;top:378px;width:428px;height:22px;background:linear-gradient(#ececec,#dcdcdc);border:1px solid #acacac"></div>
<div class="t" style="left:1059px;top:382.0px;font-size:12px;line-height:14px;color:#000;">&lt;已停用切割&gt;</div>
<svg style="left:1470px;top:385px" width="10" height="6" viewBox="0 0 10 6"><path d="M0.5 0.5L5 5L9.5 0.5" fill="none" stroke="#444" stroke-width="1.1"/></svg>
<svg style="left:1489px;top:378px" width="23" height="23" viewBox="0 0 23 23"><circle cx="10.5" cy="10.5" r="9.5" fill="#f0f0f0" stroke="#666" stroke-width="1.3"/><circle cx="16" cy="20" r="2" fill="none" stroke="#333"/><circle cx="20" cy="17" r="2" fill="none" stroke="#333"/><path d="M14 13L20 20M21 12L16 19" stroke="#333"/></svg>
<div class="a" style="left:1049px;top:426px;width:468px;height:112px;border:1px solid #dcdcdc"></div>
<div class="a" style="left:1054px;top:419px;width:32px;height:14px;background:#f0f0f0"></div>
<div class="t" style="left:1056px;top:418.4px;font-size:12px;line-height:14px;color:#000;">資訊</div>
<div class="t" style="left:1056px;top:445.3px;font-size:12px;line-height:14px;color:#000;">長度:</div>
<div class="a" style="left:1140px;top:443px;width:142px;height:22px;background:#f0f0f0;border:1px solid #d4d4d4"></div>
<div class="t" style="left:1081.0px;width:200px;text-align:right;top:446.3px;font-size:11px;line-height:14px;color:#888;;-webkit-text-stroke:0">0.00 mm</div>
<div class="t" style="left:1284px;top:445.3px;font-size:12px;line-height:14px;color:#000;">體積:</div>
<div class="a" style="left:1369px;top:443px;width:142px;height:22px;background:#f0f0f0;border:1px solid #d4d4d4"></div>
<div class="t" style="left:1310.0px;width:200px;text-align:right;top:446.3px;font-size:11px;line-height:14px;color:#888;;-webkit-text-stroke:0">0.000 cm³</div>
<div class="t" style="left:1056px;top:477.5px;font-size:12px;line-height:14px;color:#000;">寬度:</div>
<div class="a" style="left:1140px;top:475px;width:142px;height:22px;background:#f0f0f0;border:1px solid #d4d4d4"></div>
<div class="t" style="left:1081.0px;width:200px;text-align:right;top:478.5px;font-size:11px;line-height:14px;color:#888;;-webkit-text-stroke:0">0.00 mm</div>
<div class="t" style="left:1284px;top:477.5px;font-size:12px;line-height:14px;color:#000;">面積:</div>
<div class="a" style="left:1369px;top:475px;width:142px;height:22px;background:#f0f0f0;border:1px solid #d4d4d4"></div>
<div class="t" style="left:1310.0px;width:200px;text-align:right;top:478.5px;font-size:11px;line-height:14px;color:#888;;-webkit-text-stroke:0">0.000 cm²</div>
<div class="t" style="left:1056px;top:509.5px;font-size:12px;line-height:14px;color:#000;">高度:</div>
<div class="a" style="left:1140px;top:507px;width:142px;height:22px;background:#f0f0f0;border:1px solid #d4d4d4"></div>
<div class="t" style="left:1081.0px;width:200px;text-align:right;top:510.5px;font-size:11px;line-height:14px;color:#888;;-webkit-text-stroke:0">0.00 mm</div>
<div class="t" style="left:1284px;top:509.5px;font-size:12px;line-height:14px;color:#000;">三角形:</div>
<div class="a" style="left:1369px;top:507px;width:142px;height:22px;background:#f0f0f0;border:1px solid #d4d4d4"></div>
<div class="t" style="left:1310.0px;width:200px;text-align:right;top:510.5px;font-size:11px;line-height:14px;color:#888;;-webkit-text-stroke:0">0</div>
<div class="a" style="left:1048px;top:548px;width:469px;height:312px;border:1px solid #a8a8a8;border-top-color:#fff;border-left-color:#fff"></div>
<div class="t" style="left:1132.0px;width:300px;text-align:center;top:696.5px;font-size:12px;line-height:14px;color:#000;">已選取 0 個零件 (共 0 個)。</div>
<svg style="left:1040px;top:870px" width="240" height="40"><rect x="13.5" y="6.5" width="20" height="12" fill="#fafafa" stroke="#555" stroke-width="1"/><path d="M16.5 9.0L19.5 12.0L16.5 15.0M22.0 15.5H27.5" fill="none" stroke="#333" stroke-width="1"/><path d="M28.2 17.0H31.8V20.2H35.0V23.5H31.8V26.5H28.2V23.5H25.0V20.2H28.2Z" fill="#e02030" stroke="#a01020" stroke-width="0.7"/><path d="M42.0 10.5L47.5 5.3H63.0V20.5L57.5 25.8H42.0Z" fill="#dff0fb" stroke="#2a8ad4" stroke-width="1.2"/><path d="M47.2 10.5V25.8M42.0 15.6H57.5M47.2 10.5L52.7 5.3M57.5 15.6L63.0 10.4M52.3 10.5V25.8M42.0 20.7H57.5M52.3 10.5L57.8 5.3M57.5 20.7L63.0 15.5M42.0 10.5H57.5V25.8M57.5 10.5L63.0 5.3" fill="none" stroke="#2a8ad4" stroke-width="1.1"/><circle cx="80.0" cy="15.8" r="10.5" fill="url(#sph2)" stroke="#555" stroke-width="1.5"/><rect x="67.0" y="9.0" width="26" height="13" fill="#eef6fc"/><path d="M68.0 10.3H92.0M68.0 15.5H92.0M68.0 20.5H92.0" stroke="#3a8ad0" stroke-width="1.8"/><circle cx="108.0" cy="15.8" r="10.3" fill="url(#sph2)" stroke="#555" stroke-width="1.5"/><circle cx="111.5" cy="19.5" r="4.3" fill="#eee" stroke="#555" stroke-width="1.3"/><path d="M114.5 22.5L118.5 26.5" stroke="#555" stroke-width="1.6"/><path d="M133.0 10.0L137.0 5.5H145.0V15.0L141.0 19.0H133.0Z" fill="#e8e8e8" stroke="#888" stroke-width="0.9"/><circle cx="131.8" cy="17.8" r="6.5" fill="#f4f4f4" stroke="#888" stroke-width="1"/><path d="M131.8 17.8V11.3A6.5 6.5 0 0 1 138.3 17.8Z" fill="#e02020"/><path d="M141.0 13.5L147.8 27.0H134.2Z" fill="#f5c518" stroke="#c89a10" stroke-width="0.6"/><path d="M141.0 17.0V23.0M141.0 24.3V26.0" stroke="#000" stroke-width="1.4"/><path d="M158.7 17.4V10.9A6.5 6.5 0 1 0 165.2 17.4Z" fill="#fafafa" stroke="#7a7a7a" stroke-width="1"/><path d="M161.8 12.8L165.8 8.3H174.4V17.3L170.8 20.9H167.8V15.3H161.8Z" fill="#fafafa" stroke="#7a7a7a" stroke-width="1" stroke-linejoin="round"/><path d="M170.8 20.9V12.8L174.4 8.3V17.3Z" fill="#e0e0e0"/><path d="M187.0 17.4V10.9A6.5 6.5 0 1 0 193.5 17.4Z" fill="#e8e8e8" stroke="#7a7a7a" stroke-width="1"/><path d="M189.6 12.8L193.6 8.3H202.2V17.3L198.6 20.9H195.6V15.3H189.6Z" fill="#e4e4e4" stroke="#7a7a7a" stroke-width="1" stroke-linejoin="round"/><path d="M198.6 20.9V12.8L202.2 8.3V17.3Z" fill="#c4c4c4"/><path d="M214.0 17.4V10.9A6.5 6.5 0 1 0 220.5 17.4Z" fill="#e8e8e8" stroke="#7a7a7a" stroke-width="1"/><path d="M218.0 12.0L222.0 8.3H230.8V26.8H218.0Z" fill="#d8d8d8" stroke="#888" stroke-width="0.9"/><path d="M217.8 17.0H230.8V26.8H228.0V20.0H225.5V26.8H223.0V20.0H220.5V26.8H217.8Z" fill="#555"/></svg>
<div class="a" style="left:432px;top:157px;width:605px;height:723px;background:linear-gradient(#fdfdfd,#e3e3e3)"></div>
<svg style="left:432px;top:157px" width="605" height="723"><rect x="4.5" y="1.5" width="21.5" height="696" fill="#fafafa" stroke="#d6d6d6" stroke-width="1.6"/><rect x="4.5" y="698" width="596.5" height="21" fill="#f5f5f5" stroke="#d6d6d6" stroke-width="1.6"/><path d="M26 698V719" stroke="#d6d6d6" stroke-width="1.6"/><path d="M4 697.5H26M19.5 676.5H26M19.5 656.5H26M19.5 635.5H26M4 615.5H26M19.5 594.5H26M19.5 574.5H26M19.5 553.5H26M4 532.5H26M19.5 511.5H26M19.5 491.5H26M19.5 470.5H26M4 450.5H26M19.5 429.5H26M19.5 409.5H26M19.5 388.5H26M4 368.5H26M19.5 347.5H26M19.5 327.5H26M19.5 306.5H26M4 285.5H26M19.5 264.5H26M19.5 244.5H26M19.5 223.5H26M4 203.5H26M19.5 182.5H26M19.5 162.5H26M19.5 141.5H26M4 120.5H26M19.5 99.5H26M19.5 79.5H26M19.5 58.5H26M4 38.5H26M19.5 17.5H26M25.5 698V719M46.5 699V705.5M66.5 699V705.5M87.5 699V705.5M107.5 698V719M128.5 699V705.5M148.5 699V705.5M169.5 699V705.5M190.5 698V719M211.5 699V705.5M231.5 699V705.5M252.5 699V705.5M272.5 698V719M293.5 699V705.5M313.5 699V705.5M334.5 699V705.5M355.5 698V719M376.5 699V705.5M396.5 699V705.5M417.5 699V705.5M437.5 698V719M458.5 699V705.5M478.5 699V705.5M499.5 699V705.5M520.5 698V719M541.5 699V705.5M561.5 699V705.5M582.5 699V705.5" stroke="#8c8c8c" stroke-width="1" fill="none"/><text transform="translate(17.80000000000001 693.5) rotate(-90)" font-size="7.6" font-family="Liberation Sans" fill="#7a7a7a">0 mm</text><text transform="translate(17.80000000000001 611.5) rotate(-90)" font-size="7.6" font-family="Liberation Sans" fill="#7a7a7a">100</text><text transform="translate(17.80000000000001 528.5) rotate(-90)" font-size="7.6" font-family="Liberation Sans" fill="#7a7a7a">200</text><text transform="translate(17.80000000000001 446.5) rotate(-90)" font-size="7.6" font-family="Liberation Sans" fill="#7a7a7a">300</text><text transform="translate(17.80000000000001 364.5) rotate(-90)" font-size="7.6" font-family="Liberation Sans" fill="#7a7a7a">400</text><text transform="translate(17.80000000000001 281.5) rotate(-90)" font-size="7.6" font-family="Liberation Sans" fill="#7a7a7a">500</text><text transform="translate(17.80000000000001 199.5) rotate(-90)" font-size="7.6" font-family="Liberation Sans" fill="#7a7a7a">600</text><text transform="translate(17.80000000000001 116.5) rotate(-90)" font-size="7.6" font-family="Liberation Sans" fill="#7a7a7a">700</text><text transform="translate(17.80000000000001 34.5) rotate(-90)" font-size="7.6" font-family="Liberation Sans" fill="#7a7a7a">800</text><text x="30.0" y="712.3" font-size="7.9" font-family="Liberation Sans" fill="#7a7a7a">0 mm</text><text x="112.5" y="712.3" font-size="7.9" font-family="Liberation Sans" fill="#7a7a7a">100</text><text x="194.9" y="712.3" font-size="7.9" font-family="Liberation Sans" fill="#7a7a7a">200</text><text x="277.4" y="712.3" font-size="7.9" font-family="Liberation Sans" fill="#7a7a7a">300</text><text x="359.8" y="712.3" font-size="7.9" font-family="Liberation Sans" fill="#7a7a7a">400</text><text x="442.2" y="712.3" font-size="7.9" font-family="Liberation Sans" fill="#7a7a7a">500</text><text x="524.7" y="712.3" font-size="7.9" font-family="Liberation Sans" fill="#7a7a7a">600</text><path d="M311.50 80.00L49.50 231.50M311.50 80.00L556.50 220.50M49.50 231.50L294.50 372.00M556.50 220.50L294.50 372.00M49.50 231.50L49.50 501.00M556.50 220.50L556.50 490.00M311.50 80.00L311.50 349.50" stroke="#000" stroke-width="1.1" fill="none"/><path d="M294.50 641.50L556.50 490.00L311.50 349.50L49.50 501.00Z" fill="#f9d49b"/><path d="M294.50 641.50L49.50 501.00M300.32 638.13L55.32 497.63M306.14 634.77L61.14 494.27M311.97 631.40L66.97 490.90M317.79 628.03L72.79 487.53M323.61 624.67L78.61 484.17M329.43 621.30L84.43 480.80M335.26 617.93L90.26 477.43M341.08 614.57L96.08 474.07M346.90 611.20L101.90 470.70M352.72 607.83L107.72 467.33M358.54 604.47L113.54 463.97M364.37 601.10L119.37 460.60M370.19 597.73L125.19 457.23M376.01 594.37L131.01 453.87M381.83 591.00L136.83 450.50M387.66 587.63L142.66 447.13M393.48 584.27L148.48 443.77M399.30 580.90L154.30 440.40M405.12 577.53L160.12 437.03M410.94 574.17L165.94 433.67M416.77 570.80L171.77 430.30M422.59 567.43L177.59 426.93M428.41 564.07L183.41 423.57M434.23 560.70L189.23 420.20M440.06 557.33L195.06 416.83M445.88 553.97L200.88 413.47M451.70 550.60L206.70 410.10M457.52 547.23L212.52 406.73M463.34 543.87L218.34 403.37M469.17 540.50L224.17 400.00M474.99 537.13L229.99 396.63M480.81 533.77L235.81 393.27M486.63 530.40L241.63 389.90M492.46 527.03L247.46 386.53M498.28 523.67L253.28 383.17M504.10 520.30L259.10 379.80M509.92 516.93L264.92 376.43M515.74 513.57L270.74 373.07M521.57 510.20L276.57 369.70M527.39 506.83L282.39 366.33M533.21 503.47L288.21 362.97M539.03 500.10L294.03 359.60M544.86 496.73L299.86 356.23M550.68 493.37L305.68 352.87M556.50 490.00L311.50 349.50M294.50 641.50L556.50 490.00M288.67 638.15L550.67 486.65M282.83 634.81L544.83 483.31M277.00 631.46L539.00 479.96M271.17 628.12L533.17 476.62M265.33 624.77L527.33 473.27M259.50 621.43L521.50 469.93M253.67 618.08L515.67 466.58M247.83 614.74L509.83 463.24M242.00 611.39L504.00 459.89M236.17 608.05L498.17 456.55M230.33 604.70L492.33 453.20M224.50 601.36L486.50 449.86M218.67 598.01L480.67 446.51M212.83 594.67L474.83 443.17M207.00 591.32L469.00 439.82M201.17 587.98L463.17 436.48M195.33 584.63L457.33 433.13M189.50 581.29L451.50 429.79M183.67 577.94L445.67 426.44M177.83 574.60L439.83 423.10M172.00 571.25L434.00 419.75M166.17 567.90L428.17 416.40M160.33 564.56L422.33 413.06M154.50 561.21L416.50 409.71M148.67 557.87L410.67 406.37M142.83 554.52L404.83 403.02M137.00 551.18L399.00 399.68M131.17 547.83L393.17 396.33M125.33 544.49L387.33 392.99M119.50 541.14L381.50 389.64M113.67 537.80L375.67 386.30M107.83 534.45L369.83 382.95M102.00 531.11L364.00 379.61M96.17 527.76L358.17 376.26M90.33 524.42L352.33 372.92M84.50 521.07L346.50 369.57M78.67 517.73L340.67 366.23M72.83 514.38L334.83 362.88M67.00 511.04L329.00 359.54M61.17 507.69L323.17 356.19M55.33 504.35L317.33 352.85M49.50 501.00L311.50 349.50" stroke="#000" stroke-width="0.87" fill="none" shape-rendering="crispEdges"/><path d="M294.50 372.00L294.50 641.50" stroke="#000" stroke-width="1.1"/><path d="M293.00 644.00L273.00 632.00L271.00 635.60L265.20 625.30L276.20 625.00L275.00 629.00L293.00 640.00Z" fill="#22cc5a"/><path d="M270.00 625.20L276.20 625.00L275.00 629.00L274.00 632.50L271.00 635.60L268.50 631.00Z" fill="#1f8a45"/><path d="M295.00 644.00L315.00 632.00L318.20 635.60L323.20 625.20L311.30 625.20L313.00 629.00L295.00 640.00Z" fill="#f01010"/><path d="M318.20 635.60L323.20 625.20L318.00 625.20L316.00 630.00Z" fill="#b80d0d"/><path d="M294.20 608.70L299.80 618.20L296.30 620.30L296.30 643.50L292.30 643.50L292.30 620.30L288.30 618.20Z" fill="#2a7fd6"/><path d="M294.20 608.70L299.80 618.20L296.30 620.30L296.30 643.50L294.50 643.50Z" fill="#2066b0" opacity="0.6"/><path d="M507.70 45.30L539.90 63.50L539.90 102.70L507.70 83.00Z" fill="#fbfbfb"/><path d="M572.40 45.30L539.90 63.50L539.90 102.70L572.40 83.00Z" fill="#a2a2a2"/><path d="M539.90 27.30L507.70 45.30L539.90 63.50L572.40 45.30Z" fill="#f7f7f7"/><path d="M507.70 45.30L539.90 63.50L572.40 45.30M507.70 45.30L507.70 83.00L539.90 102.70M572.40 45.30L572.40 83.00L539.90 102.70" fill="none" stroke="#111" stroke-width="1"/><path d="M507.70 45.30L539.90 27.30L572.40 45.30" fill="none" stroke="#111" stroke-width="1" stroke-dasharray="1.5 1.5"/><rect x="537.4" y="28.0" width="5" height="5" fill="#c8c8c8" opacity="0.8"/><rect x="510.5" y="45.5" width="5" height="5" fill="#c8c8c8" opacity="0.8"/><rect x="564.5" y="45.5" width="5" height="5" fill="#c8c8c8" opacity="0.8"/><rect x="508.5" y="76.5" width="5" height="5" fill="#c8c8c8" opacity="0.8"/><rect x="566.5" y="76.5" width="5" height="5" fill="#c8c8c8" opacity="0.8"/><rect x="537.4" y="62.5" width="5" height="5" fill="#c8c8c8" opacity="0.8"/><rect x="537.4" y="95.5" width="5" height="5" fill="#c8c8c8" opacity="0.8"/><path d="M500.50 81.00L539.90 102.70" stroke="#22c460" stroke-width="2.4"/><path d="M539.90 102.70L578.60 81.00" stroke="#d41a1a" stroke-width="2.4"/><path d="M539.90 102.70L539.90 58.80" stroke="#2f6fb0" stroke-width="1.8"/><text x="494" y="81" text-anchor="middle" font-size="11" font-family="Liberation Sans" fill="#5a9a7a">Y</text><text x="585" y="81.5" text-anchor="middle" font-size="11" font-family="Liberation Sans" fill="#c86060">X</text><text x="539.9" y="54" text-anchor="middle" font-size="10" font-weight="bold" font-family="Liberation Sans" fill="#4a7aa0">Z</text><path d="M535.00 42.00L543.00 44.50M536.50 45.00L543.50 47.00" stroke="#555" stroke-width="1"/><text transform="translate(523.5 77) skewY(29.5)" text-anchor="middle" font-size="9.5" font-weight="bold" fill="#333">左</text><text transform="translate(556 78) skewY(-29.5)" text-anchor="middle" font-size="9.5" font-weight="bold" fill="#2a3040">前</text></svg>
</body></html>
